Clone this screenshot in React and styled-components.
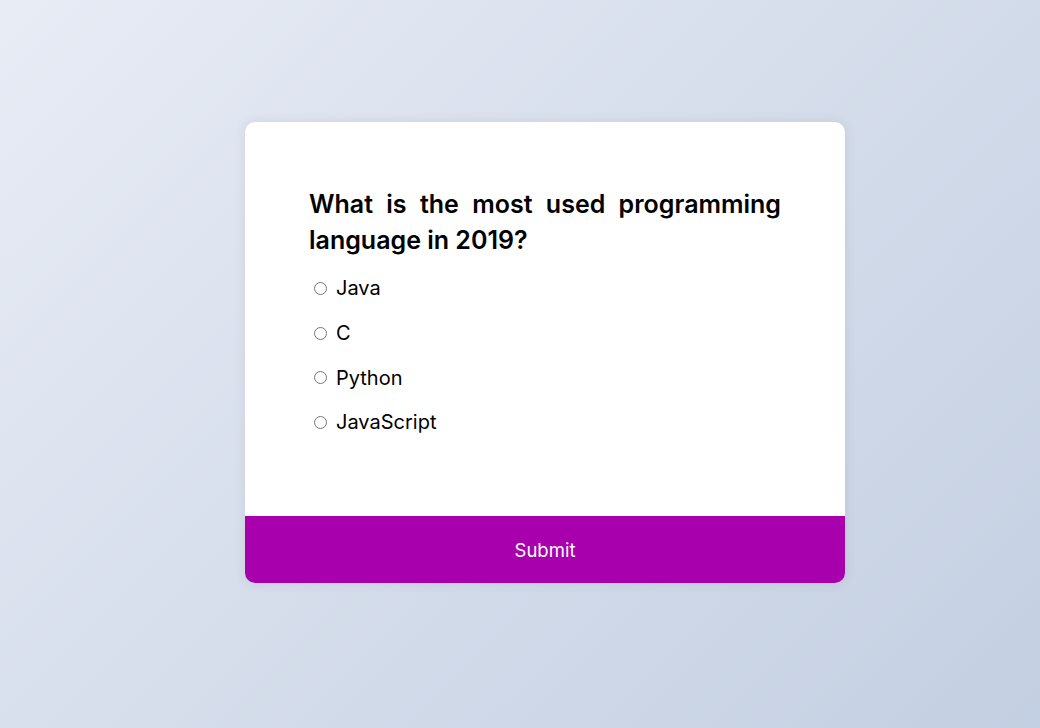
import React from 'react'
import styled, {createGlobalStyle} from 'styled-components'

const Global = createGlobalStyle`
  * { box-sizing: border-box; }
  html, body { margin: 0; padding: 0; }
  body {
    font-family: Inter, "Noto Sans", sans-serif;
    background: linear-gradient(135deg, #e8ecf5 0%, #c3cfe2 100%);
    min-height: 100vh;
  }
`

const Page = styled.div`
  min-height: 100vh;
  display: flex;
  align-items: center;
  justify-content: center;
  padding: 0 0 23px 50px;
`

const Card = styled.div`
  width: 600px;
  background: #fff;
  border-radius: 10px;
  box-shadow: 0 0 10px 2px rgba(100, 100, 100, 0.1);
  overflow: hidden;
`

const Body = styled.div`
  padding: 64px 64px 63px;
`

const Question = styled.h2`
  margin: 0;
  font-size: 25px;
  line-height: 36px;
  font-weight: 600;
  text-align: justify;
  color: #000;
`

const List = styled.ul`
  list-style: none;
  margin: 0;
  padding: 0;
`

const Item = styled.li`
  margin: 16px 0;
  font-size: 20px;
  line-height: 28.8px;
  display: flex;
  align-items: center;
`

const Radio = styled.input`
  margin: 0 3px 0 5px;
  width: 13px;
  height: 13px;
`

const Label = styled.label`
  padding-left: 6px;
  color: #000;
`

const Submit = styled.button`
  display: block;
  width: 100%;
  border: none;
  background: #a900ae;
  color: #fff;
  font-family: inherit;
  font-size: 18.5px;
  line-height: 26px;
  padding: 20.5px 0;
  cursor: pointer;
`

const answers = ['Java', 'C', 'Python', 'JavaScript']

export default function App() {
  return <>
    <Global />
    <Page>
      <Card>
        <Body>
          <Question>What is the most used programming language in 2019?</Question>
          <List>
            {answers.map((a, i) => <Item key={a}>
              <Radio type="radio" name="answer" id={'a' + i} />
              <Label htmlFor={'a' + i}>{a}</Label>
            </Item>)}
          </List>
        </Body>
        <Submit>Submit</Submit>
      </Card>
    </Page>
  </>
}
